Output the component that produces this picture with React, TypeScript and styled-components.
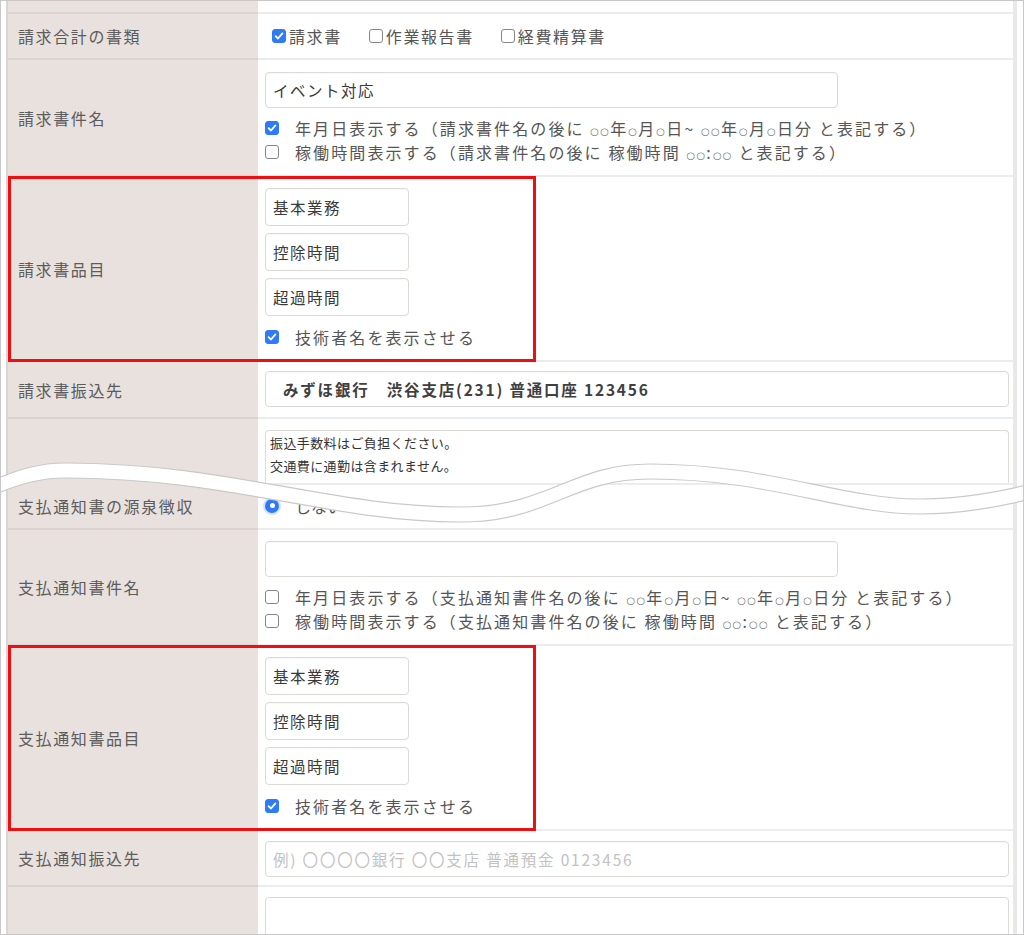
import React from 'react';
import styled, { createGlobalStyle, css } from 'styled-components';

const GlobalStyle = createGlobalStyle`
  html, body {
    margin: 0;
    padding: 0;
    background: #fff;
  }
  body {
    font-family: "Noto Sans CJK JP", "Noto Sans", sans-serif;
  }
`;

const Frame = styled.div`
  position: relative;
  width: 1024px;
  height: 935px;
  box-sizing: border-box;
  border: 1px solid #c8c8c8;
  padding: 0 6px 0 5px;
  overflow: hidden;
  background: #fff;
`;

const Table = styled.div`
  border-left: 2px solid #d8d5d3;
  border-right: 4px solid #e8e8e8;
  min-height: 100%;
`;

const Row = styled.div<{ $h: number; $mark?: boolean }>`
  position: relative;
  display: grid;
  grid-template-columns: 250px 1fr;
  height: ${p => p.$h}px;
  ${p =>
    p.$mark &&
    css`
      &::after {
        content: '';
        position: absolute;
        left: 0;
        top: -1px;
        bottom: 0;
        width: 528px;
        box-sizing: border-box;
        border: 3px solid #ee1010;
        pointer-events: none;
      }
    `}
`;

const Label = styled.div`
  box-sizing: border-box;
  background: #e8e1de;
  border-bottom: 2px solid #dcd3cf;
  display: flex;
  align-items: center;
  padding-left: 10px;
  font-size: 16px;
  letter-spacing: 1.6px;
  color: #5c5c5c;
`;

const Value = styled.div<{ $pt?: number; $center?: boolean }>`
  box-sizing: border-box;
  border-bottom: 2px solid #ececec;
  padding: ${p => p.$pt ?? 0}px 4px 0 7px;
  display: flex;
  flex-direction: column;
  align-items: flex-start;
  ${p =>
    p.$center &&
    css`
      justify-content: center;
    `}
`;

const Field = styled.input<{ $w?: number; $h?: number; $indent?: number; $bold?: boolean }>`
  box-sizing: border-box;
  width: ${p => (p.$w ? `${p.$w}px` : '100%')};
  height: ${p => p.$h ?? 36}px;
  flex: none;
  margin: 0 0 ${p => (p.$h === 38 ? 7 : 0)}px;
  padding: 0 0 0 ${p => p.$indent ?? 7}px;
  border: 1px solid #ddd9d6;
  border-radius: 4px;
  background: #fff;
  box-shadow: inset 0 1px 1px rgba(0, 0, 0, 0.03);
  font-family: "Noto Sans CJK JP", "Noto Sans", sans-serif;
  font-size: 15.5px;
  font-weight: ${p => (p.$bold ? 700 : 400)};
  letter-spacing: ${p => (p.$bold ? 1.8 : 1.5)}px;
  color: ${p => (p.$bold ? '#404040' : '#3a3a3a')};
  outline: none;

  &::placeholder {
    color: #c2c2c2;
    letter-spacing: 1.8px;
  }
`;

const Memo = styled.textarea<{ $h: number; $open?: boolean }>`
  box-sizing: border-box;
  width: 100%;
  height: ${p => p.$h}px;
  flex: none;
  margin: 0;
  padding: 0 4px;
  border: 1px solid #ddd9d6;
  border-radius: 4px;
  resize: none;
  font-family: "Noto Sans CJK JP", "Noto Sans", sans-serif;
  font-size: 13px;
  line-height: 23px;
  letter-spacing: 0.4px;
  color: #333;
  outline: none;
  ${p =>
    p.$open &&
    css`
      border-bottom-color: transparent;
      border-bottom-left-radius: 0;
      border-bottom-right-radius: 0;
    `}
`;

const Options = styled.div`
  display: flex;
  align-items: center;
  gap: 27px;
  padding-left: 7px;
  font-size: 16px;
  letter-spacing: 1.6px;
  color: #555;
`;

const Option = styled.label`
  display: flex;
  align-items: center;
  gap: 3px;
`;

const CheckLine = styled.label<{ $mt?: number }>`
  display: flex;
  align-items: center;
  gap: 16px;
  height: 24px;
  margin-top: ${p => p.$mt ?? 0}px;
  font-size: 16px;
  letter-spacing: 2.1px;
  color: #555;
  white-space: nowrap;
`;

const Rings = styled.span`
  font-family: "DejaVu Sans", sans-serif;
  font-size: 10px;
  letter-spacing: 1.2px;
  color: #707070;
`;

const Box = styled.span<{ $on?: boolean }>`
  flex: none;
  width: 14px;
  height: 14px;
  box-sizing: border-box;
  border-radius: 3px;
  border: 1px solid ${p => (p.$on ? '#2f7bf5' : '#858585')};
  background: ${p => (p.$on ? '#2f7bf5' : '#fff')};
  display: inline-flex;
  align-items: center;
  justify-content: center;
`;

const Radio = styled.span`
  flex: none;
  width: 14px;
  height: 14px;
  box-sizing: border-box;
  border-radius: 50%;
  background: #2f7bf5;
  box-shadow: 0 0 0 2px rgba(47, 123, 245, 0.22);
  display: inline-flex;
  align-items: center;
  justify-content: center;

  &::after {
    content: '';
    width: 5px;
    height: 5px;
    border-radius: 50%;
    background: #fff;
  }
`;

const RadioLine = styled.div`
  display: flex;
  align-items: center;
  gap: 16px;
  font-size: 16px;
  color: #555;
`;

const Wave = styled.svg`
  position: absolute;
  left: -1px;
  top: 450px;
  width: 1026px;
  height: 90px;
  pointer-events: none;
`;

const Check = ({ on }: { on?: boolean }) => (
  <Box $on={on}>
    {on && (
      <svg width="10" height="10" viewBox="0 0 10 10">
        <path d="M1.6 5.2 L4 7.5 L8.4 2.4" fill="none" stroke="#fff" strokeWidth="1.8" strokeLinecap="round" strokeLinejoin="round" />
      </svg>
    )}
  </Box>
);

const O = ({ n = 1 }: { n?: number }) => <Rings>{'○'.repeat(n)}</Rings>;

const DateNote = () => (
  <>
    <O n={2} />年<O />月<O />日~ <O n={2} />年<O />月<O />日分
  </>
);

// wave segments: start point, then [c1, c2, end] per cubic
const start: [number, number] = [-4, 28];
const segs: number[][] = [
  [20, 18, 40, 12, 65, 12],
  [230, 12, 330, 56, 460, 56],
  [550, 56, 570, 13, 650, 13],
  [770, 13, 840, 48, 920, 48],
  [965, 48, 1000, 40, 1032, 33],
];

const curve = (dy: number) =>
  `M ${start[0]} ${start[1] + dy} ` +
  segs.map(s => `C ${s[0]} ${s[1] + dy}, ${s[2]} ${s[3] + dy}, ${s[4]} ${s[5] + dy}`).join(' ');

const band = (dy: number) => {
  const pts: number[][] = [[start[0], start[1]], ...segs.map(s => [s[4], s[5]])];
  let back = `L ${pts[pts.length - 1][0]} ${pts[pts.length - 1][1] + dy} `;
  for (let i = segs.length - 1; i >= 0; i--) {
    const s = segs[i];
    const p = pts[i];
    back += `C ${s[2]} ${s[3] + dy}, ${s[0]} ${s[1] + dy}, ${p[0]} ${p[1] + dy} `;
  }
  return curve(0) + ' ' + back + 'Z';
};

const ItemFields = () => (
  <>
    <Field $w={144} $h={38} readOnly defaultValue="基本業務" />
    <Field $w={144} $h={38} readOnly defaultValue="控除時間" />
    <Field $w={144} $h={38} readOnly defaultValue="超過時間" style={{ marginBottom: 0 }} />
    <CheckLine $mt={9}>
      <Check on />
      技術者名を表示させる
    </CheckLine>
  </>
);

export default function App() {
  return (
    <>
      <GlobalStyle />
      <Frame>
        <Table>
          <Row $h={13}>
            <Label />
            <Value />
          </Row>
          <Row $h={46}>
            <Label>請求合計の書類</Label>
            <Value $center>
              <Options>
                <Option>
                  <Check on />
                  請求書
                </Option>
                <Option>
                  <Check />
                  作業報告書
                </Option>
                <Option>
                  <Check />
                  経費精算書
                </Option>
              </Options>
            </Value>
          </Row>
          <Row $h={117}>
            <Label>請求書件名</Label>
            <Value $pt={12}>
              <Field $w={573} readOnly defaultValue="イベント対応" />
              <CheckLine $mt={8}>
                <Check on />
                <span>
                  年月日表示する（請求書件名の後に <DateNote /> と表記する）
                </span>
              </CheckLine>
              <CheckLine>
                <Check />
                <span>
                  稼働時間表示する（請求書件名の後に 稼働時間 <O n={2} />:<O n={2} /> と表記する）
                </span>
              </CheckLine>
            </Value>
          </Row>
          <Row $h={185} $mark>
            <Label>請求書品目</Label>
            <Value $pt={11}>
              <ItemFields />
            </Value>
          </Row>
          <Row $h={57}>
            <Label>請求書振込先</Label>
            <Value $pt={9}>
              <Field $indent={17} $bold readOnly defaultValue="みずほ銀行　渋谷支店(231) 普通口座 123456" />
            </Value>
          </Row>
          <Row $h={64}>
            <Label />
            <Value $pt={11}>
              <Memo $h={53} $open readOnly defaultValue={'振込手数料はご負担ください。\n交通費に通勤は含まれません。'} />
            </Value>
          </Row>
          <Row $h={47}>
            <Label>支払通知書の源泉徴収</Label>
            <Value $center>
              <RadioLine>
                <Radio />
                しない
              </RadioLine>
            </Value>
          </Row>
          <Row $h={116}>
            <Label>支払通知書件名</Label>
            <Value $pt={11}>
              <Field $w={573} readOnly defaultValue="" />
              <CheckLine $mt={8}>
                <Check />
                <span>
                  年月日表示する（支払通知書件名の後に <DateNote /> と表記する）
                </span>
              </CheckLine>
              <CheckLine>
                <Check />
                <span>
                  稼働時間表示する（支払通知書件名の後に 稼働時間 <O n={2} />:<O n={2} /> と表記する）
                </span>
              </CheckLine>
            </Value>
          </Row>
          <Row $h={185} $mark>
            <Label>支払通知書品目</Label>
            <Value $pt={11}>
              <ItemFields />
            </Value>
          </Row>
          <Row $h={56}>
            <Label>支払通知振込先</Label>
            <Value $pt={10}>
              <Field readOnly placeholder="例) 〇〇〇〇銀行 〇〇支店 普通預金 0123456" />
            </Value>
          </Row>
          <Row $h={60}>
            <Label />
            <Value $pt={10}>
              <Memo $h={80} readOnly defaultValue="" />
            </Value>
          </Row>
        </Table>
        <Wave viewBox="0 0 1026 90">
          <path d={band(15)} fill="#fff" />
          <path d={curve(0)} fill="none" stroke="#c9c9c9" strokeWidth="1.2" />
          <path d={curve(15)} fill="none" stroke="#c9c9c9" strokeWidth="1.2" />
        </Wave>
      </Frame>
    </>
  );
}
